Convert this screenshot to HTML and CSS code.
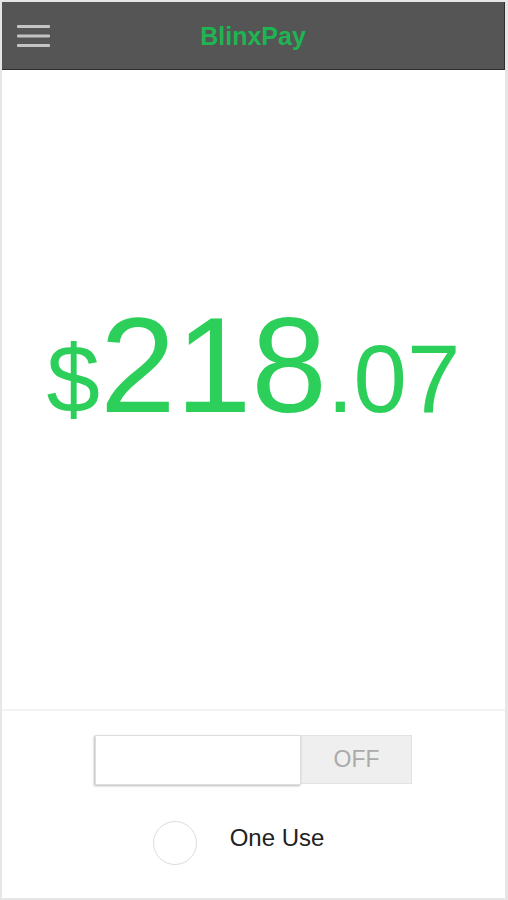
FILE: index.html
```html
<!DOCTYPE html>
<html lang="en">
<head>
    <meta charset="UTF-8">
    <meta name="viewport" content="width=device-width, initial-scale=1.0">
    <title>BlinxPay</title>
    <link rel="stylesheet" href="styles.css">
</head>
<body>
    <div id="frame">
        <div id="topBar">
            <div class="menuIcon">
                <svg width="33" height="24" viewBox="0 0 33 24">
                    <rect x="0" y="0" width="33" height="3" rx="1" fill="#c4c4c4"/>
                    <rect x="0" y="9.5" width="33" height="3" rx="1" fill="#c4c4c4"/>
                    <rect x="0" y="19" width="33" height="3" rx="1" fill="#c4c4c4"/>
                </svg>
            </div>
            <div id="appName">BlinxPay</div>
            <div></div>
        </div>
        <div id="balance">
            <span class="small">$</span><span class="big">218</span><span class="small">.07</span>
        </div>
        <div id="controls">
            <div class="toggleRow">
                <div class="field"></div>
                <div class="offBtn">OFF</div>
            </div>
            <div class="optionRow">
                <div class="radio"></div>
                <div class="optionLabel">One Use</div>
            </div>
        </div>
    </div>
</body>
</html>
```

FILE: styles.css
```css
body{
    margin: 0;
    font-family: "Liberation Sans", Arial, sans-serif;
    background-color: #fff;
}
#frame{
    display: flex;
    flex-direction: column;
    width: 508px;
    height: 900px;
    box-sizing: border-box;
    border: 2px solid #e6e6e6;
    border-right-width: 3px;
}
#topBar{
    display: grid;
    grid-template-columns: 1fr auto 1fr;
    align-items: center;
    height: 68px;
    box-sizing: border-box;
    background-color: #555555;
    border-right: 1px solid #2e2e2e;
    border-bottom: 1px solid #2e2e2e;
}
.menuIcon{
    display: flex;
    padding-left: 15px;
    padding-top: 2px;
}
#appName{
    font-size: 25px;
    font-weight: bold;
    color: #1fb452;
    padding-top: 1px;
}
#balance{
    height: 641px;
    box-sizing: border-box;
    padding-top: 227px;
    text-align: center;
    line-height: 1;
    color: #2dcf5b;
    border-bottom: 2px solid #f3f3f3;
    white-space: nowrap;
}
.big{
    font-size: 136px;
}
.small{
    font-size: 96px;
}
#controls{
    display: flex;
    flex-direction: column;
    align-items: center;
    flex: 1;
}
.toggleRow{
    display: flex;
    margin-top: 24px;
}
.field{
    width: 206px;
    height: 50px;
    box-sizing: border-box;
    border: 1px solid #dedede;
    box-shadow: -1px 1px 2px rgba(0,0,0,0.28);
    background-color: #fff;
}
.offBtn{
    display: flex;
    justify-content: center;
    align-items: center;
    width: 111px;
    height: 49px;
    box-sizing: border-box;
    background-color: #efefef;
    border: 1px solid #e2e2e2;
    font-size: 23px;
    color: #ababab;
}
.optionRow{
    display: flex;
    align-items: center;
    gap: 33px;
    margin-top: 36px;
    margin-right: 30px;
}
.radio{
    width: 44px;
    height: 44px;
    box-sizing: border-box;
    border: 1px solid #dcdcdc;
    border-radius: 50%;
}
.optionLabel{
    font-size: 24px;
    color: #222;
    padding-bottom: 10px;
}
```
